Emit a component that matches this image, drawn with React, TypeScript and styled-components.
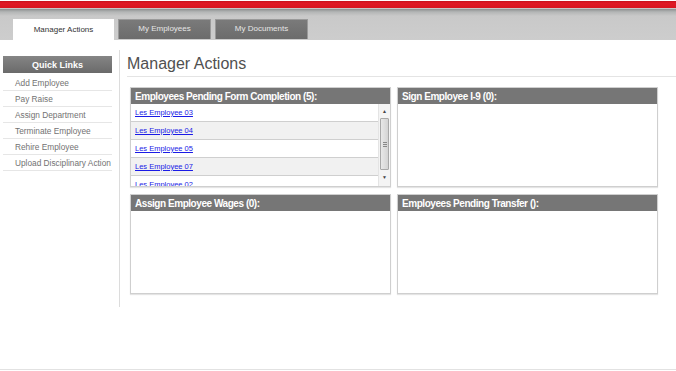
import React from "react";
import styled, { createGlobalStyle } from "styled-components";

const GlobalStyle = createGlobalStyle`
  html, body {
    margin: 0;
    padding: 0;
    background: #ffffff;
    font-family: "Liberation Sans", Arial, sans-serif;
  }
`;

interface IPanel {
  title: string;
  items?: string[];
}

const quickLinks: string[] = [
  "Add Employee",
  "Pay Raise",
  "Assign Department",
  "Terminate Employee",
  "Rehire Employee",
  "Upload Disciplinary Action",
];

const panels: IPanel[] = [
  {
    title: "Employees Pending Form Completion (5):",
    items: ["Les Employee 03", "Les Employee 04", "Les Employee 05", "Les Employee 07", "Les Employee 02"],
  },
  { title: "Sign Employee I-9 (0):" },
  { title: "Assign Employee Wages (0):" },
  { title: "Employees Pending Transfer ():" },
];

const tabs = ["Manager Actions", "My Employees", "My Documents"];

const App = () => {
  return (
    <Page>
      <GlobalStyle />
      <Header>
        <RedStripe />
        <TabBar>
          {tabs.map((tab, i) => (
            <Tab key={tab} active={i === 0}>
              {tab}
            </Tab>
          ))}
        </TabBar>
      </Header>
      <Body>
        <Sidebar>
          <SidebarTitle>Quick Links</SidebarTitle>
          {quickLinks.map((link) => (
            <SidebarLink key={link}>{link}</SidebarLink>
          ))}
        </Sidebar>
        <Main>
          <Title>Manager Actions</Title>
          <PanelGrid>
            {panels.map((panel) => (
              <Panel key={panel.title}>
                <PanelHeader>{panel.title}</PanelHeader>
                <PanelBody>
                  {panel.items && (
                    <>
                      <List>
                        {panel.items.map((item, i) => (
                          <ListRow key={item} alt={i % 2 === 1}>
                            <EmployeeLink href="#">{item}</EmployeeLink>
                          </ListRow>
                        ))}
                      </List>
                      <Scrollbar>
                        <Arrow>▲</Arrow>
                        <Thumb>
                          <Grip />
                        </Thumb>
                        <Arrow>▼</Arrow>
                      </Scrollbar>
                    </>
                  )}
                </PanelBody>
              </Panel>
            ))}
          </PanelGrid>
        </Main>
      </Body>
    </Page>
  );
};

const Page = styled.div`
  width: 676px;
  height: 369px;
  border-bottom: 1px solid #e2e2e2;
  overflow: hidden;
`;

const Header = styled.div`
  height: 40px;
  padding-top: 1px;
  box-sizing: border-box;
  background: linear-gradient(
    to bottom,
    #ffffff 0px,
    #ffffff 8px,
    #8d9090 9px,
    #b4b6b6 12px,
    #c9c9c9 16px,
    #cdcdcd 40px
  );
`;

const RedStripe = styled.div`
  height: 7px;
  background: linear-gradient(to bottom, #c5121c, #e01a26 30%, #d8151f);
`;

const TabBar = styled.div`
  display: flex;
  gap: 4px;
  padding: 11px 0 0 13px;
`;

const Tab = styled.div<{ active?: boolean }>`
  width: ${(p) => (p.active ? "101px" : "93px")};
  height: ${(p) => (p.active ? "21px" : "20px")};
  box-sizing: border-box;
  display: flex;
  align-items: center;
  justify-content: center;
  font-size: 8px;
  color: ${(p) => (p.active ? "#333333" : "#e6e6e6")};
  background: ${(p) => (p.active ? "#ffffff" : "linear-gradient(to bottom, #7a7a7a, #6c6c6c)")};
  border: ${(p) => (p.active ? "none" : "1px solid #9a9a9a")};
  border-bottom: none;
  padding-bottom: ${(p) => (p.active ? "1px" : "3px")};
`;

const Body = styled.div`
  display: flex;
  align-items: flex-start;
`;

const Sidebar = styled.div`
  width: 120px;
  box-sizing: border-box;
  padding: 6px 7px 0 3px;
  margin-top: 10px;
  height: 257px;
  border-right: 1px solid #dcdcdc;
`;

const SidebarTitle = styled.div`
  height: 17px;
  display: flex;
  align-items: center;
  justify-content: center;
  background: linear-gradient(to bottom, #858585, #6a6a6a);
  color: #ffffff;
  font-size: 9px;
  font-weight: bold;
  margin-bottom: 2px;
`;

const SidebarLink = styled.div`
  height: 16px;
  box-sizing: border-box;
  border-bottom: 1px solid #e6e6e6;
  padding-left: 12px;
  display: flex;
  align-items: center;
  white-space: nowrap;
  font-size: 8.3px;
  color: #727272;
`;

const Main = styled.div`
  flex: 1;
  padding-top: 14px;
`;

const Title = styled.div`
  margin-left: 7px;
  height: 22px;
  border-bottom: 1px solid #e4e4e4;
  font-size: 16px;
  color: #505050;
  line-height: 19px;
`;

const PanelGrid = styled.div`
  display: grid;
  grid-template-columns: 261px 261px;
  grid-auto-rows: 100px;
  column-gap: 6px;
  row-gap: 7px;
  padding: 10px 0 0 10px;
`;

const Panel = styled.div`
  border: 1px solid #cfcfcf;
  box-shadow: 0 1px 1px #e4e4e4;
  display: flex;
  flex-direction: column;
  background: #ffffff;
`;

const PanelHeader = styled.div`
  height: 16px;
  flex: none;
  background: #767676;
  color: #ffffff;
  font-size: 10px;
  letter-spacing: -0.45px;
  font-weight: bold;
  padding-left: 4px;
  display: flex;
  align-items: center;
`;

const PanelBody = styled.div`
  flex: 1;
  display: flex;
  overflow: hidden;
`;

const List = styled.div`
  flex: 1;
  overflow: hidden;
`;

const ListRow = styled.div<{ alt?: boolean }>`
  height: 18px;
  box-sizing: border-box;
  border-bottom: 1px solid #cfcfcf;
  background: ${(p) => (p.alt ? "#f1f1f1" : "#ffffff")};
  padding-left: 4px;
  display: flex;
  align-items: center;
`;

const EmployeeLink = styled.a`
  font-size: 7.5px;
  color: #1a1ae6;
  text-decoration: underline;
`;

const Scrollbar = styled.div`
  width: 11px;
  display: flex;
  flex-direction: column;
  background: #f4f4f4;
  border-left: 1px solid #e4e4e4;
`;

const Arrow = styled.div`
  height: 14px;
  font-size: 5px;
  color: #444444;
  display: flex;
  align-items: center;
  justify-content: center;
`;

const Thumb = styled.div`
  flex: none;
  height: 50px;
  margin: 0 1px;
  border: 1px solid #a8a8a8;
  border-radius: 1px;
  background: linear-gradient(to right, #e8e8e8, #d4d4d4);
  display: flex;
  align-items: center;
  justify-content: center;
`;

const Grip = styled.div`
  width: 4px;
  height: 5px;
  border-top: 1px solid #888888;
  border-bottom: 1px solid #888888;
  box-sizing: border-box;
  background: linear-gradient(#888888, #888888) center / 100% 1px no-repeat;
`;

export default App;
